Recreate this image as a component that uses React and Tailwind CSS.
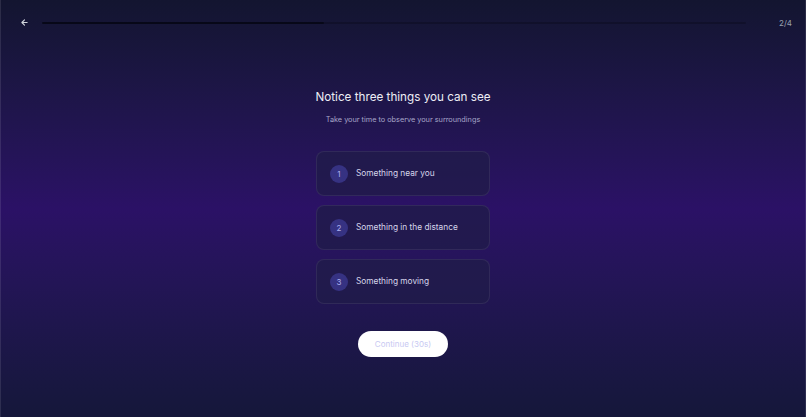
import React from "react";

const ITEMS = [
  { n: 1, label: "Something near you" },
  { n: 2, label: "Something in the distance" },
  { n: 3, label: "Something moving" },
];

const BackArrow = () => (
  <svg className="w-[9px] h-[9px]" viewBox="0 0 24 24" fill="none" stroke="currentColor" strokeWidth="3" strokeLinecap="round" strokeLinejoin="round">
    <path d="M19 12H5M12 19l-7-7 7-7" />
  </svg>
);

export default function App() {
  return (
    <div
      className="h-screen w-full flex flex-col bg-linear-to-b from-[#131530] via-[#2b1166] to-[#15173a] border-x border-white/10 text-white"
      style={{ fontFamily: "Inter, 'Noto Sans', sans-serif" }}
    >
      {/* Top bar */}
      <div className="flex items-center pl-[19px] pr-[13px] pt-[17px] h-[28px]">
        <button className="text-gray-300 flex items-center">
          <BackArrow />
        </button>
        <div className="flex-1 h-[2px] ml-[13px] rounded-full bg-black/20 overflow-hidden">
          <div className="h-full w-[40%] bg-[#070818] rounded-full" />
        </div>
        <div className="ml-[33px] text-[8px] text-gray-400">2/4</div>
      </div>

      {/* Content */}
      <div className="flex flex-col items-center pt-[64px]">
        <h1 className="text-[11.7px] text-[#ededf5] leading-none">Notice three things you can see</h1>
        <p className="mt-[12px] text-[7.3px] text-[#a7a6c9] leading-none">Take your time to observe your surroundings</p>

        <div className="mt-[28px] flex flex-col gap-[9px] w-[174px]">
          {ITEMS.map((item) => (
            <div
              key={item.n}
              className="h-[45px] flex items-center gap-[8px] px-[13px] rounded-[8px] bg-[#201c4a]/80 border border-white/[0.07]"
            >
              <div className="w-[18px] h-[18px] rounded-full bg-[#363282] flex items-center justify-center text-[8px] text-[#aeb0ee]">
                {item.n}
              </div>
              <span className="text-[8.3px] text-[#d6d5ea]">{item.label}</span>
            </div>
          ))}
        </div>

        <button className="mt-[27px] w-[90px] h-[26px] rounded-full bg-white text-[8px] text-[#c8c9f2]">
          Continue (30s)
        </button>
      </div>
    </div>
  );
}
